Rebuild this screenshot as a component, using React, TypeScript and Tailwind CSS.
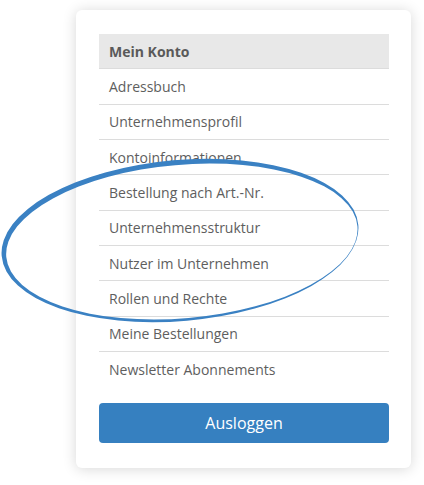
const items = [
  "Adressbuch",
  "Unternehmensprofil",
  "Kontoinformationen",
  "Bestellung nach Art.-Nr.",
  "Unternehmensstruktur",
  "Nutzer im Unternehmen",
  "Rollen und Rechte",
  "Meine Bestellungen",
  "Newsletter Abonnements",
];

export default function App() {
  return (
    <div className="relative min-h-[485px] w-[424px] bg-white font-['Open_Sans',sans-serif]">
      <div className="pl-[76px] pt-[10px]">
        {/* Konto-Menü */}
        <div className="w-[335px] rounded-md bg-white px-[23px] pb-[25px] pr-[22px] pt-[24px] shadow-[0_1px_14px_rgba(0,0,0,0.16)]">
          <div className="flex h-[35.33px] items-center border-b border-[#dcdcdc] bg-[#e8e8e8] px-[10px] text-[14px] font-bold text-[#5a5a5a]">
            Mein Konto
          </div>
          {items.map((label, i) => (
            <div
              key={label}
              className={`flex h-[35.33px] items-center px-[10px] text-[14px] text-[#5e5e5e] ${
                i < items.length - 1 ? "border-b border-[#dcdcdc]" : ""
              }`}
            >
              {label}
            </div>
          ))}
          <button className="mt-[15.5px] h-[40px] w-full rounded-[4px] bg-[#3680c0] text-[16px] text-white">
            Ausloggen
          </button>
        </div>
      </div>

      {/* Markierung */}
      <svg
        className="pointer-events-none absolute left-0 top-0"
        width="424"
        height="485"
        viewBox="0 0 424 485"
      >
        <g transform="rotate(-5 180 240.5)">
          <path
            fillRule="evenodd"
            fill="#3a81c3"
            d="M1 240.5a179 80.5 0 1 0 358 0a179 80.5 0 1 0 -358 0Z M5.5 241.75a176.25 76.75 0 1 0 352.5 0a176.25 76.75 0 1 0 -352.5 0Z"
          />
        </g>
      </svg>
    </div>
  );
}
